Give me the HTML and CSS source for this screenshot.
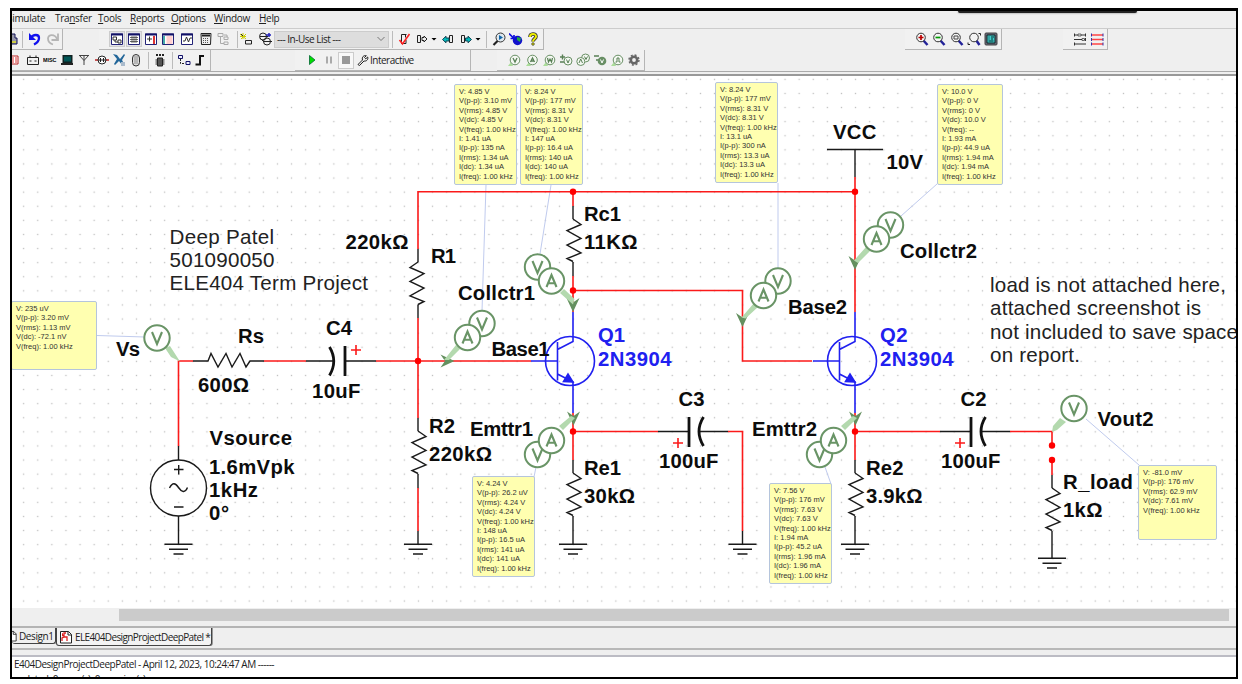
FILE: index.html
```
<!DOCTYPE html>
<html lang="en">
<head>
<meta charset="utf-8">
<title>ELE404DesignProjectDeepPatel</title>
<link rel="stylesheet" href="styles.css">
</head>
<body>
<div class="window">
<div class="notch"></div>
<nav class="menu">
<span class="m-sim">Simulate</span><span class="m-tra">Tra<u>n</u>sfer</span><span class="m-too"><u>T</u>ools</span><span class="m-rep"><u>R</u>eports</span><span class="m-opt"><u>O</u>ptions</span><span class="m-win"><u>W</u>indow</span><span class="m-hel"><u>H</u>elp</span>
</nav>
<div class="bars">
<div class="row">
<div class="group ga">
<svg class="w6" viewBox="8 0 6 14"><path d="M6 2h5v4h2v6H6z" fill="#99a" stroke="#115" /><path d="M6 10h6" stroke="#cc4" stroke-width="2"/></svg>
<i class="sep g4"></i>
<svg class="g4" viewBox="0 0 14 14"><path d="M2 1v7h7z" fill="#11e"/><path d="M4 6C6 2 12 2 12 6c0 3-2 5-5 6.500" fill="none" stroke="#11e" stroke-width="2.300"/></svg>
<svg class="g5" viewBox="0 0 14 14"><path d="M12 1.500v6.500H5.500" fill="none" stroke="#b5b5b5" stroke-width="1.800"/><path d="M11 7C9 2 2 2 2 6.500c0 3 2 5 5 6" fill="none" stroke="#b5b5b5" stroke-width="1.800"/></svg>
</div>
<div class="group gb">
<svg class="on" viewBox="0 0 14 14"><path d="M1.500 2h11v10.500h-11z" fill="#fff" stroke="#227"/><path d="M1 2.500h12" stroke="#116" stroke-width="2"/><path d="M3 5h3.500v3H3zM8 8h3v3H8zM5 8v2h3" fill="none" stroke="#333"/></svg>
<svg class="g3 on" viewBox="0 0 14 14"><path d="M1.500 2h11v10.500h-11z" fill="#fff" stroke="#227"/><path d="M1 2.500h12" stroke="#116" stroke-width="2"/><path d="M3 5.500h8M3 7.500h8M3 9.500h8M5 4v7M7 4v7M9 4v7" stroke="#444" stroke-width=".8"/></svg>
<svg class="g3" viewBox="0 0 14 14"><path d="M1.500 2h11v10.500h-11z" fill="#fff" stroke="#227"/><path d="M1 2.500h12" stroke="#116" stroke-width="2"/><path d="M3 7h5M5.500 4.500v5" stroke="#333"/><path d="M10 4v8" stroke="#d33" stroke-width="2"/></svg>
<svg class="g3" viewBox="0 0 14 14"><path d="M1.500 2h11v10.500h-11z" fill="#fff" stroke="#227"/><path d="M1 2.500h12" stroke="#116" stroke-width="2"/><path d="M3 4v8" stroke="#4aa" stroke-width="2"/><path d="M5.500 5h6M5.500 7h6M5.500 9h6M5.500 11h6" stroke="#f77" stroke-width=".7"/></svg>
<svg class="g5" viewBox="0 0 14 14"><path d="M1.500 2h11v10.500h-11z" fill="#fff" stroke="#227"/><path d="M1 2.500h12" stroke="#116" stroke-width="2"/><path d="M3 9h2l1.500-4 2 5L10 6h2" fill="none" stroke="#333"/></svg>
<svg class="g5" viewBox="0 0 14 14"><path d="M2 1.500h10l-.5 11h-9z" fill="#eee" stroke="#222"/><path d="M3 3.500h8" stroke="#222" stroke-width="2"/><path d="M4 6.500h6M4 8.500h6M4 10.500h6" stroke="#555" stroke-dasharray="1 1"/></svg>
<svg class="g3" viewBox="0 0 14 14"><path d="M2 1.500h5v3H2zM8 5h4v2.500H8zM8 10h4v2.500H8zM4.500 5v6.500H8M8 3h3v2" fill="none" stroke="#aaa"/></svg>
<i class="sep g7"></i>
<svg class="g1" viewBox="0 0 14 14"><path d="M1 2l6 5M7 2L2 7M4 1v6M1 4.500h6" stroke="#cc0"/><path d="M2 2l2 2" stroke="#222"/><path d="M6.500 8.500h6v3.500h-6z" fill="#eee" stroke="#222"/></svg>
<svg class="g5" viewBox="0 0 14 14"><g fill="none" stroke="#222"><circle cx="5" cy="4.500" r="3.500"/><circle cx="9" cy="9.500" r="3.500"/><path d="M2 4.500h8M6 9.500h8M2 6l4 4"/></g><path d="M8 3h5M11 1v4" stroke="#22b" stroke-width="1.500"/></svg>
<div class="combo g2"><span>--- In-Use List ---</span><svg viewBox="0 0 10 10"><path d="M1.500 3L5 6.500 8.500 3" fill="none" stroke="#777"/></svg></div>
<i class="sep g3"></i>
<svg class="g4" viewBox="0 0 14 14"><path d="M4.500 10V2.500h5M8.500 2.500v3M4 11.500h5V8" stroke="#222" fill="none"/><path d="M2.500 8l3 4L12.500 2" stroke="#f22" fill="none" stroke-width="1.600"/></svg>
<svg class="g4" viewBox="0 0 14 14"><path d="M2.500 3.500h3v7h-3zM7 5.500h2V4l3 3-3 3V8.500H7z" fill="#eee" stroke="#222"/></svg>
<svg class="w6 g2" viewBox="0 0 6 14"><path d="M.5 6h5L3 8.500z"/></svg>
<svg class="g4" viewBox="0 0 14 14"><path d="M8.500 3.500h3v7h-3z" fill="#eee" stroke="#222"/><path d="M1.500 7.500l3.500-3.300v1.800h3v3H5v1.800z" fill="#0bb" stroke="#145"/></svg>
<svg class="g4" viewBox="0 0 14 14"><path d="M2.500 3.500h3v7h-3z" fill="#eee" stroke="#222"/><path d="M12.500 7.500L9 4.200v1.800H6.500v3H9v1.800z" fill="#0bb" stroke="#145"/></svg>
<svg class="w6 g2" viewBox="0 0 6 14"><path d="M.5 6h5L3 8.500z"/></svg>
<i class="sep g5"></i>
<svg class="g5" viewBox="0 0 14 14"><path d="M6 8.500L1.500 13" stroke="#222" stroke-width="2.200"/><circle cx="8.500" cy="5.500" r="4.500" fill="#dfe8ee" stroke="#333"/><path d="M7 3l4 2.500L7 8z" fill="#16a"/></svg>
<svg class="g3" viewBox="0 0 14 14"><circle cx="8.500" cy="8.500" r="4.700" fill="#11c"/><path d="M8 5l4 1-1 4-3-2z" fill="#2a4"/><path d="M0 1.500l5 5M5 3v3.500H1.500" fill="none" stroke="#11d" stroke-width="1.700"/></svg>
<svg class="g3" viewBox="0 0 14 14"><path d="M4 5c0-4 6-4 6-.5C10 7 7 6.500 7 9.500" fill="none" stroke="#333" stroke-width="3.600"/><path d="M4 5c0-4 6-4 6-.5C10 7 7 6.500 7 9.500" fill="none" stroke="#ee0" stroke-width="2"/><circle cx="7" cy="12" r="1.300" fill="#dd0" stroke="#333" stroke-width=".7"/></svg>
</div>
<div class="group gc">
<svg viewBox="0 0 14 14"><path d="M8 8l4.500 5" stroke="#229" stroke-width="2.500"/><circle cx="6" cy="5.500" r="4.300" fill="#f4f4f4" stroke="#333"/><path d="M3.500 5.500h5M6 3v5" stroke="#b00" stroke-width="1.700"/></svg>
<svg class="g3" viewBox="0 0 14 14"><path d="M8 8l4.500 5" stroke="#229" stroke-width="2.500"/><circle cx="6" cy="5.500" r="4.300" fill="#f4f4f4" stroke="#333"/><path d="M3.500 5.500h5" stroke="#090" stroke-width="1.700"/></svg>
<svg class="g4" viewBox="0 0 14 14"><path d="M8 8l4.500 5" stroke="#229" stroke-width="2.500"/><circle cx="6" cy="5.500" r="4.300" fill="#f4f4f4" stroke="#333"/><path d="M4 4h4v3H4z" fill="none" stroke="#444"/></svg>
<svg class="g3" viewBox="0 0 14 14"><path d="M9 8l3.500 5" stroke="#229" stroke-width="2.500"/><circle cx="7" cy="5.500" r="4.300" fill="#f4f4f4" stroke="#333"/><path d="M11.500 1.500h2v2M1 10.500v2h2" fill="none" stroke="#222"/></svg>
<svg class="g3" viewBox="0 0 14 14"><rect x="1" y="1" width="12" height="12" rx="1" fill="#667" stroke="#444"/><path d="M3 3h8v8H3z" fill="#4cc" stroke="#122"/><path d="M4.500 5h1M7 5h3M4.500 7h1M7 7h2M4.500 9h5" stroke="#033"/></svg>
</div>
<div class="group gd">
<svg viewBox="0 0 14 14"><path d="M1 3h12M1 7.500h12M1 12h12M1.500 1.500v3M12.500 1.500v3M1.500 10.500v3M12.500 6v3" stroke="#333"/><path d="M5 2h3v2H5zM9 6.500h2.500v2H9z" fill="#eee" stroke="#333" stroke-width=".7"/></svg>
<svg class="g3" viewBox="0 0 14 14"><path d="M2 3h11M2 7.500h11M2 12h11" stroke="#f44" stroke-width="1.300"/><path d="M1.500 1.500v3M13 1.500v3M1.500 6v3M13 6v3M1.500 10.500v3M13 10.500v3" stroke="#33a"/></svg>
</div>
</div>
<div class="row row2">
<div class="group ge">
<svg class="w7" viewBox="7 0 7 14"><path d="M2 3h11v8H2z" fill="#fff" stroke="#b22"/><path d="M7 5h5M7 7h5M7 9h5" stroke="#d33" stroke-dasharray="2 1"/></svg>
<svg class="g7" viewBox="0 0 14 14"><path d="M1.500 4.500h11v7h-11zM4 4V2.500M10 4V2.500M3.500 8h2M8.500 8h2" fill="none" stroke="#222"/></svg>
<svg class="g3" viewBox="0 0 14 14"><text x="0" y="9" class="misc" textLength="13.500" lengthAdjust="spacingAndGlyphs">MISC</text></svg>
<svg class="g3" viewBox="0 0 14 14"><path d="M2.500 2h10v8h-10z" fill="#122"/><path d="M4 3.500h7v5H4z" fill="#055"/><path d="M1 11h12" stroke="#222" stroke-width="2"/></svg>
<svg class="g3" viewBox="0 0 14 14"><path d="M7 12V3M2.500 2.500L7 7.500l4.500-5M2 2.500h10" fill="none" stroke="#444"/></svg>
<svg class="g4" viewBox="0 0 14 14"><path d="M0 7h3M11 7h3" stroke="#b22" stroke-width="1.500"/><circle cx="7" cy="7" r="4" fill="#fff" stroke="#222"/><path d="M3 7h8M5.500 5v4M8.500 5v4" stroke="#222"/></svg>
<svg class="g3" viewBox="0 0 14 14"><path d="M1 1l4 1 3 4 4-5 1 1-3 5 2 4-2 1-3-4-4 4-1-1 3-5z" fill="#269"/><path d="M9 9h4v4H9z" fill="#abc"/></svg>
<svg class="g3" viewBox="0 0 14 14"><rect x="3.500" y="1.500" width="7" height="11.500" rx="3.500" fill="#ddd" stroke="#333"/><path d="M5.500 4h3M5.500 6h3M5.500 8h3M5.500 10h3" stroke="#444" stroke-dasharray="1 1"/></svg>
<i class="sep g5"></i>
<svg class="g4" viewBox="0 0 14 14"><path d="M3 2h8" stroke="#222" stroke-width="2" stroke-dasharray="2 1"/><path d="M4.500 5h5v8h-5zM2.500 7h2M2.500 9h2M2.500 11h2M9.500 7h2M9.500 9h2M9.500 11h2" fill="#555" stroke="#222"/></svg>
<i class="sep g5"></i>
<svg class="g4" viewBox="0 0 14 14"><path d="M1.500 2.500h4v3h-4zM9 8.500h4v3H9z" fill="#eef" stroke="#116"/><path d="M3.500 6v4.500H8" fill="none" stroke="#222" stroke-dasharray="2 1"/></svg>
<svg class="g2" viewBox="0 0 14 14"><path d="M2.500 11.500h4.500V3H11" fill="none" stroke="#111" stroke-width="2"/></svg>
</div>
<div class="group gf">
<svg viewBox="0 0 14 14"><path d="M4.500 2.500v9l5.500-4.500z" fill="#0d0" stroke="#063" stroke-width=".8"/></svg>
<svg class="g3" viewBox="0 0 14 14"><path d="M5 3.500v7M9 3.500v7" stroke="#aaa" stroke-width="2"/></svg>
<div class="stop g2"><i></i></div>
<svg class="g2" viewBox="0 0 14 14"><path d="M2 11.500L6.500 7C5.500 4 8 2 10.300 2.700L8.500 4.500l1.300 1.300 1.900-1.800c.8 2.500-1.200 4.500-3.700 4L3.500 12.500z" fill="#eee" stroke="#222"/></svg>
<span class="inter">Interactive</span>
</div>
<div class="group gg">
<svg viewBox="0 0 14 14"><path d="M4 9l-3 4h5z" fill="#ad9"/><circle cx="8" cy="7" r="4.800" fill="#f4f8f2" stroke="#698f65"/><path d="M6 5l2 4 2-4" fill="none" stroke="#587f55" stroke-width="1.300"/></svg>
<svg class="g4" viewBox="0 0 14 14"><path d="M4 9l-3 4h5z" fill="#ad9"/><circle cx="7.500" cy="7" r="4.800" fill="#f4f8f2" stroke="#698f65"/><path d="M5.500 9l2-4 2 4M6.500 8h2" fill="none" stroke="#587f55" stroke-width="1.300"/></svg>
<svg class="g3" viewBox="0 0 14 14"><path d="M4 9l-3 4h5z" fill="#ad9"/><circle cx="8" cy="7" r="4.800" fill="#f4f8f2" stroke="#698f65"/><path d="M5.500 5l1 4L8 6l1.500 3 1-4" fill="none" stroke="#587f55" stroke-width="1.200"/></svg>
<svg class="g3" viewBox="0 0 14 14"><path d="M1 4h5M3.500 1.500v5M1 9h5" stroke="#587f55" stroke-width="1.400"/><circle cx="9" cy="8" r="4" fill="#f4f8f2" stroke="#698f65"/><path d="M7.500 6.500L9 10l1.500-3.500" fill="none" stroke="#587f55"/></svg>
<svg class="g3" viewBox="0 0 14 14"><circle cx="9.500" cy="5" r="4" fill="#f4f8f2" stroke="#698f65"/><circle cx="4.800" cy="8.500" r="4" fill="#f4f8f2" stroke="#698f65"/><path d="M3 10l1.700-4 1.800 4M8.500 3.500L10 6.500l1.500-3" fill="none" stroke="#587f55"/></svg>
<svg class="g3" viewBox="0 0 14 14"><path d="M1 3h5M3 7h4" stroke="#587f55" stroke-width="1.600"/><circle cx="9" cy="8" r="4.300" fill="#698f65"/><path d="M7.500 6.500L9 10l1.500-3.500" fill="none" stroke="#fff"/></svg>
<svg class="g3" viewBox="0 0 14 14"><path d="M4 9l-3 4h5z" fill="#ad9"/><circle cx="8" cy="7" r="4.800" fill="#f4f8f2" stroke="#698f65"/><path d="M5.500 9h1.500V5h2v4h1.500" fill="none" stroke="#587f55"/></svg>
<svg class="g3" viewBox="0 0 14 14"><circle cx="7" cy="7" r="3.200" fill="none" stroke="#666" stroke-width="2.600"/><circle cx="7" cy="7" r="5" fill="none" stroke="#666" stroke-width="1.400" stroke-dasharray="2 1.930"/></svg>
</div>
</div>
</div>
<main class="sheet">
<svg class="circuit" viewBox="12 76 1224 532">
<defs>
<pattern id="grid" x="16.600" y="72.300" width="14.100" height="14.100" patternUnits="userSpaceOnUse"><rect x="6.400" y="6.400" width="1.300" height="1.300" fill="#bdbdbd"/></pattern>
<path id="res" d="M0 0L8 5.500-6 11.500 8 19.500-6 26 8 34-6 39.500 0 42.500"/>
<path id="gnd" d="M-14 0H14M-9.500 5H9.500M-5 9.700H5"/>
<path id="plus" d="M-5 0H5M0-5V5"/>
<path id="tip" d="M-6.500-14L0-9.500 6.500-14 0 0z"/>
<g id="pv"><circle r="12.700"/><path d="M-5-6L0 6 5-6"/></g>
<g id="pa"><circle r="12.700"/><path d="M-5 6L0-6 5 6M-3.300 2.200H3.300"/></g>
<g id="npn"><circle cx="-3" r="24.500"/><path d="M-42 0H-15.500M-15.500-19V19.500M-15.500-11.500L0-19.500V-49M-15.500 13L0 21V52"/><path d="M0 21L-9.500 20.500-5 13z" fill="#2020f0"/></g>
</defs>
<rect x="12" y="76" width="1224" height="532" fill="url(#grid)"/>
<g class="links"><path d="M97 335.500L145 337M486 185L482 311M551 185L540 254M778 183V268M937 184L901 216M536 467L534 477M825 467L831 484M1086 419L1139 465"/></g>
<g class="wire">
<path d="M193 361H178.500V446M264 361H306M376 361H531M418 249V191.700H855M418 318V418M418 488V531"/>
<path d="M573 191.700V206M573 276V312M573 290.500H742.500V361H812M573 413V460M573 431.500H658M728 431.500H742.500V531"/>
<path d="M855 177V312M855 413V460M855 431.500H940M1010 431.500H1052V445M1052 460V475"/>
</g>
<g class="part">
<path d="M193 361H208L211 353.500 218 367 226 353.500 232 367 240 353.500 246 367 250 361H264M306 361H333M345 361H376M178.500 446V460M178.500 516V544"/>
<circle cx="178.500" cy="488" r="28"/><path d="M174 469.500h9.500M178.700 465v9.500M174 507h9.500M169.500 488c3-6 6-5 9-.5s6.500 6 9 0"/>
<path d="M418 249V262M418 304.500V318M418 418V431M418 474V488M418 531V544M573 206V219M573 262V276M573 460V473M573 516V544M658 431.500H689M699 431.500H728M742.500 531V544"/>
<path d="M855 150V177M827 149.500H883M855 460V473M855 516V544M940 431.500H971M981 431.500H1010M1052 475V488M1052 531V558"/>
<use href="#res" transform="translate(418 262) scale(-1 1)"/><use href="#res" x="418" y="431"/><use href="#res" x="573" y="219"/><use href="#res" x="573" y="473"/><use href="#res" x="855" y="473"/><use href="#res" x="1052" y="488"/>
<use href="#gnd" x="178.500" y="544.300"/><use href="#gnd" x="418" y="544.300"/><use href="#gnd" x="573" y="544.300"/><use href="#gnd" x="742.500" y="544.300"/><use href="#gnd" x="855" y="544.300"/><use href="#gnd" x="1052" y="558.300"/>
</g>
<g class="plates"><path d="M345 346V376M329.500 347Q338 361 329.500 375.500M689 417V447M703.500 417Q694.500 431.500 703.500 446M971 417V447M985.500 417Q976.500 431.500 985.500 446"/></g>
<g class="wire"><use href="#plus" x="356" y="350"/><use href="#plus" x="678" y="443"/><use href="#plus" x="960" y="443"/></g>
<g class="blue"><use href="#npn" x="573" y="361"/><use href="#npn" x="855" y="361"/></g>
<g fill="#f00"><circle cx="418" cy="361" r="3.200"/><circle cx="573" cy="191.700" r="3.200"/><circle cx="573" cy="290.500" r="3.200"/><circle cx="573" cy="431.500" r="3.200"/><circle cx="855" cy="191.700" r="3.200"/><circle cx="855" cy="431.500" r="3.200"/><circle cx="1052" cy="445.500" r="3.200"/><circle cx="1052" cy="460" r="3.200"/></g>
<g class="tips"><use href="#tip" x="573" y="312"/><use href="#tip" transform="translate(454.500 361) rotate(-90)"/><use href="#tip" x="573.500" y="425.500"/><use href="#tip" x="742.500" y="327"/><use href="#tip" x="855" y="270"/><use href="#tip" x="855.500" y="425.500"/></g>
<g class="stubs"><path d="M165 348L170 346 180 361.500 171 357zM564 289L574.500 299 573 304.500 560 293zM456 345L460 349 449 360 444 360zM563 430L559 426 571 416 575 418zM754 303L758 307 745.500 318.500 741.500 317.500zM866 247L870 251 858 263 854 260.500zM845 430L841 426 853 416 857 418zM1060 418L1066 422 1057 430 1052 432 1053 426z"/></g>
<g class="probes"><use href="#pv" x="157" y="338"/><use href="#pv" x="537.500" y="267"/><use href="#pa" x="551.500" y="281"/><use href="#pv" x="482" y="323.500"/><use href="#pa" x="467.500" y="337.500"/><use href="#pv" x="537.500" y="454.500"/><use href="#pa" x="551.500" y="440.500"/><use href="#pv" x="778" y="281"/><use href="#pa" x="763.500" y="295.500"/><use href="#pv" x="890.500" y="225"/><use href="#pa" x="876.500" y="239"/><use href="#pv" x="819.500" y="454.500"/><use href="#pa" x="833.500" y="440.500"/><use href="#pv" x="1074" y="408.500"/></g>
<g class="label">
<text x="116" y="356" textLength="24">Vs</text><text x="238" y="343" textLength="26">Rs</text><text x="326" y="335" textLength="26">C4</text><text x="198" y="391.500" textLength="51">600Ω</text><text x="312" y="397.500" textLength="48.500">10uF</text>
<text x="209.500" y="445" textLength="82.500">Vsource</text><text x="209" y="473.500" textLength="85.500">1.6mVpk</text><text x="209" y="497" textLength="49">1kHz</text><text x="209" y="520" textLength="20">0°</text>
<text x="345.500" y="249" textLength="63">220kΩ</text><text x="431" y="263" textLength="25">R1</text><text x="584" y="221" textLength="37">Rc1</text><text x="584" y="249" textLength="53.500">11KΩ</text><text x="458" y="299.500" textLength="77">Collctr1</text>
<text x="491.500" y="356" textLength="58">Base1</text><text x="429" y="433" textLength="26">R2</text><text x="429" y="461" textLength="63">220kΩ</text><text x="470" y="436" textLength="63">Emttr1</text><text x="678.500" y="405.500" textLength="26">C3</text><text x="659" y="468" textLength="59.500">100uF</text><text x="584" y="475" textLength="37">Re1</text><text x="584" y="503" textLength="51">30kΩ</text>
<text x="833" y="139" textLength="43.500">VCC</text><text x="886.500" y="169" textLength="36.500">10V</text><text x="900" y="257.500" textLength="77">Collctr2</text><text x="788" y="314" textLength="59">Base2</text><text x="752" y="436" textLength="65">Emttr2</text><text x="960.500" y="405.500" textLength="26">C2</text><text x="941" y="468" textLength="59.500">100uF</text><text x="866" y="475" textLength="37.500">Re2</text><text x="866" y="503" textLength="56.500">3.9kΩ</text>
<text x="1097.500" y="426" textLength="56">Vout2</text><text x="1063" y="489" textLength="70">R_load</text><text x="1063" y="517" textLength="39.500">1kΩ</text>
<g fill="#2020f0"><text x="598" y="341.500" textLength="27">Q1</text><text x="598" y="366" textLength="73.500">2N3904</text><text x="880" y="341.500" textLength="27.500">Q2</text><text x="880" y="366" textLength="73.500">2N3904</text></g>
</g>
<g class="memo">
<text x="169.500" y="243.500" textLength="104.500">Deep Patel</text><text x="169.500" y="267" textLength="105">501090050</text><text x="169.500" y="290" textLength="198.500">ELE404 Term Project</text>
<text x="990" y="291.500" textLength="236">load is not attached here,</text><text x="990" y="315" textLength="211">attached screenshot is</text><text x="990" y="338.500" textLength="248">not included to save space</text><text x="990" y="362" textLength="90">on report.</text>
</g>
</svg>
<div class="note n-vs">V: 235 uV
V(p-p): 3.20 mV
V(rms): 1.13 mV
V(dc): -72.1 nV
V(freq): 1.00 kHz</div>
<div class="note n-b1">V: 4.85 V
V(p-p): 3.10 mV
V(rms): 4.85 V
V(dc): 4.85 V
V(freq): 1.00 kHz
I: 1.41 uA
I(p-p): 135 nA
I(rms): 1.34 uA
I(dc): 1.34 uA
I(freq): 1.00 kHz</div>
<div class="note n-c1">V: 8.24 V
V(p-p): 177 mV
V(rms): 8.31 V
V(dc): 8.31 V
V(freq): 1.00 kHz
I: 147 uA
I(p-p): 16.4 uA
I(rms): 140 uA
I(dc): 140 uA
I(freq): 1.00 kHz</div>
<div class="note n-b2">V: 8.24 V
V(p-p): 177 mV
V(rms): 8.31 V
V(dc): 8.31 V
V(freq): 1.00 kHz
I: 13.1 uA
I(p-p): 300 nA
I(rms): 13.3 uA
I(dc): 13.3 uA
I(freq): 1.00 kHz</div>
<div class="note n-c2">V: 10.0 V
V(p-p): 0 V
V(rms): 0 V
V(dc): 10.0 V
V(freq): --
I: 1.93 mA
I(p-p): 44.9 uA
I(rms): 1.94 mA
I(dc): 1.94 mA
I(freq): 1.00 kHz</div>
<div class="note n-e1">V: 4.24 V
V(p-p): 26.2 uV
V(rms): 4.24 V
V(dc): 4.24 V
V(freq): 1.00 kHz
I: 148 uA
I(p-p): 16.5 uA
I(rms): 141 uA
I(dc): 141 uA
I(freq): 1.00 kHz</div>
<div class="note n-e2">V: 7.56 V
V(p-p): 176 mV
V(rms): 7.63 V
V(dc): 7.63 V
V(freq): 1.00 kHz
I: 1.94 mA
I(p-p): 45.2 uA
I(rms): 1.96 mA
I(dc): 1.96 mA
I(freq): 1.00 kHz</div>
<div class="note n-out">V: -81.0 mV
V(p-p): 176 mV
V(rms): 62.9 mV
V(dc): 7.61 mV
V(freq): 1.00 kHz</div>
</main>
<div class="scroll"><i></i></div>
<div class="tabs">
<div class="tab t1"><svg viewBox="8 0 6 14"><path d="M4 1.500h6l3 3V13H4z" fill="#fff" stroke="#222"/><path d="M9.500 1.500v3.500H13" fill="none" stroke="#222"/></svg><span>Design1</span></div>
<div class="tab t2"><svg viewBox="0 0 14 14"><path d="M1.500 1.500h8l3 3V13h-11z" fill="#fff" stroke="#222"/><path d="M9 1.500V5h3.500" fill="none" stroke="#222"/><path d="M3 11V8l2-1V3h2M5 7h3v4M3 4h1M3 5.500h2" fill="none" stroke="#d22" stroke-width="1.300"/></svg><span>ELE404DesignProjectDeepPatel *</span></div>
</div>
<div class="log"><p>E404DesignProjectDeepPatel - April 12, 2023, 10:24:47 AM ------</p><p class="cut">dated: 0 error(s), 0 warning(s)</p></div>
</div>
</body>
</html>
```
FILE: styles.css
```
* { box-sizing: border-box; }
body { margin: 0; background: #fff; font-family: "Open Sans", "Noto Sans", sans-serif; font-size: 10px; color: #222; overflow: hidden; }
.window { position: relative; display: flex; flex-direction: column; width: 1228px; height: 671px; margin: 8px 0 0 10px; border: 2px solid #000; border-top-width: 3px; background: #efefef; overflow: hidden; }
.notch { position: absolute; left: 946px; top: 0; width: 179px; height: 2px; background: #222; border-radius: 0 0 3px 3px; box-shadow: 0 0 2px #666; }
.menu { display: flex; height: 18px; line-height: 14px; border-bottom: 1px solid #ccc; white-space: nowrap; flex: none; letter-spacing: -.3px; }
.menu span { flex: none; }
.menu u { text-underline-offset: 1px; text-decoration-thickness: 1px; }
.m-sim { width: 43px; margin-left: -5px; }
.m-tra { width: 43px; margin-left: 5px; }
.m-too { width: 32px; }
.m-rep { width: 41px; }
.m-opt { width: 43px; }
.m-win { width: 45px; }
.bars { flex: none; height: 47px; border-bottom: 2px solid #999; }
.row { display: flex; height: 21px; }
.row2 { height: 22px; border-bottom: 1px solid #aaa; }
.group { display: flex; align-items: center; flex: none; height: 21px; background: #f1f1f1; border-right: 1px solid #b5b5b5; border-bottom: 1px solid #b5b5b5; overflow: hidden; }
.group svg { flex: none; width: 14px; height: 14px; }
.group svg.w6 { width: 6px; }
.group svg.w7 { width: 7px; }
.group svg.on { background: #e2e2e8; outline: 1px solid #ccc; }
.ga { width: 51px; }
.gb { width: 445px; margin-left: 36px; padding-left: 11px; }
.gc { width: 97px; margin-left: 361px; padding-left: 10px; }
.gd { width: 45px; margin-left: 61px; padding-left: 10px; }
.ge { width: 199px; }
.gf { width: 176px; margin-left: 84px; padding-left: 10px; }
.gg { width: 148px; margin-left: 26px; padding-left: 10px; }
.g1 { margin-left: 1px; }
.g2 { margin-left: 2px; }
.g3 { margin-left: 3px; }
.g4 { margin-left: 4px; }
.g5 { margin-left: 5px; }
.g7 { margin-left: 7px; }
.sep { flex: none; width: 1px; height: 17px; background: #bbb; }
.combo { display: flex; align-items: center; justify-content: space-between; flex: none; width: 115px; height: 17px; padding: 0 2px 0 2px; background: #ddd; border: 1px solid #ccc; white-space: nowrap; letter-spacing: -.5px; }
.combo svg { width: 10px; height: 10px; }
.stop { display: grid; place-items: center; width: 16px; height: 17px; background: #f8f8f8; border: 1px solid #ccc; }
.stop i { width: 8px; height: 8px; background: #999; }
.inter { line-height: 14px; white-space: nowrap; letter-spacing: -.5px; }
.misc { font: bold 5.5px "Liberation Sans", sans-serif; }
.sheet { position: relative; flex: none; height: 532px; background: #fff; }
.circuit { display: block; width: 1224px; height: 532px; }
.wire { fill: none; stroke: #fb1a1a; stroke-width: 1.6; }
.part { fill: none; stroke: #1a1a1a; stroke-width: 1.4; }
.plates { fill: none; stroke: #111; stroke-width: 2.8; }
.blue { fill: none; stroke: #2020f0; stroke-width: 1.6; }
.links { fill: none; stroke: #c0cbee; stroke-width: 1; }
.tips { fill: #64905f; }
.stubs { fill: #b3d9ae; }
.probes { fill: #fff; stroke: #699466; stroke-width: 2; }
.label { font: bold 20.3px "Liberation Sans", Arial, sans-serif; fill: #0c0c0c; }
.memo { font: 20.6px "Liberation Sans", Arial, sans-serif; fill: #222; }
#pv path, #pa path { fill: none; stroke-width: 2.1; }
.note { position: absolute; height: 101px; width: 63px; padding: 2px 0 0 4px; background: #ffffb0; border: 1px solid #b5c5dc; border-radius: 2px; font: 7.5px/9.4px "Liberation Sans", Arial, sans-serif; color: #333; white-space: pre; }
.n-vs { left: -1px; top: 225px; width: 86px; height: 69px; }
.n-b1 { left: 442px; top: 8px; }
.n-c1 { left: 508px; top: 8px; }
.n-b2 { left: 703px; top: 6px; }
.n-c2 { left: 925px; top: 8px; width: 66px; }
.n-e1 { left: 460px; top: 400px; }
.n-e2 { left: 757px; top: 407px; }
.n-out { left: 1126px; top: 389px; width: 79px; height: 75px; }
.scroll { flex: none; height: 13px; padding: 1px 7px 0 107px; background: #efefef; }
.scroll i { display: block; height: 12px; background: #cbcbcb; }
.tabs { display: flex; flex: none; height: 24px; margin-top: 5px; border-top: 2px solid #b4b4b4; border-bottom: 2px solid #b8b8b8; }
.tab { display: flex; align-items: center; height: 18px; white-space: nowrap; border: 1px solid #444; border-top: 0; border-radius: 0 0 3px 3px; box-shadow: 1px 0 #999; }
.tab svg { width: 14px; height: 14px; flex: none; }
.t1 { width: 44px; height: 16px; border-left: 0; }
.t1 svg { width: 5px; }
.t1 span { margin-left: 2px; letter-spacing: -.4px; }
.t2 { width: 156px; padding-left: 2px; background: #f3f3f3; }
.t2 span { margin-left: 2px; letter-spacing: -.62px; }
.log { flex: 1; min-height: 0; margin-top: 5px; border-top: 2px solid #bcbcc4; background: #fff; overflow: hidden; white-space: nowrap; letter-spacing: -.5px; }
.log p { margin: 0; height: 13px; line-height: 15px; padding-left: 2px; }
.log .cut { padding-left: 12px; line-height: 18px; }
```
